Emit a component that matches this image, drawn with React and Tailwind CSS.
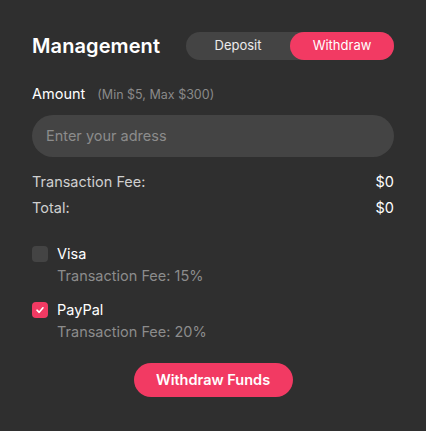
export default function App() {
    return (
        <div
            className="w-[426px] h-[431px] bg-[#2f2f2f] px-8 pt-8 text-white"
            style={{ fontFamily: "Inter, 'Noto Sans', sans-serif" }}
        >
            <div className="flex items-center justify-between">
                <h1 className="text-[20px] font-semibold leading-7 tracking-[0.1px]">Management</h1>
                <div className="flex h-7 w-[208px] rounded-full bg-[#444444] text-[13px]">
                    <button className="flex-1 rounded-full text-white/90">Deposit</button>
                    <button className="w-[104px] rounded-full bg-[#f23a63] text-white">Withdraw</button>
                </div>
            </div>

            <div className="mt-[23px] flex items-baseline gap-3">
                <span className="text-[14.5px]">Amount</span>
                <span className="text-[12.5px] text-[#8a8a8a]">(Min $5, Max $300)</span>
            </div>

            <input
                type="text"
                placeholder="Enter your adress"
                className="mt-[10px] block h-[42px] w-full rounded-full bg-[#444444] px-[14px] text-[14.5px] text-white placeholder-[#8c8c8c] outline-none"
            />

            <div className="mt-[15px] space-y-[6px] text-[14.5px]">
                <div className="flex justify-between leading-5">
                    <span className="text-[#cfcfcf]">Transaction Fee:</span>
                    <span>$0</span>
                </div>
                <div className="flex justify-between leading-5">
                    <span className="text-[#cfcfcf]">Total:</span>
                    <span>$0</span>
                </div>
            </div>

            <div className="mt-[26px] space-y-[14px]">
                <div>
                    <div className="flex items-center gap-[9px]">
                        <span className="h-4 w-4 rounded-[4px] bg-[#444444]"></span>
                        <span className="text-[14.5px] leading-5">Visa</span>
                    </div>
                    <div className="mt-[2px] pl-[25px] text-[14.5px] leading-5 text-[#8c8c8c]">Transaction Fee: 15%</div>
                </div>
                <div>
                    <div className="flex items-center gap-[9px]">
                        <span className="flex h-4 w-4 items-center justify-center rounded-[4px] bg-[#f23a63]">
                            <svg width="10" height="10" viewBox="0 0 10 10" fill="none">
                                <path d="M2 5.2L4.2 7.3L8 2.8" stroke="white" strokeWidth="1.6" strokeLinecap="round" strokeLinejoin="round" />
                            </svg>
                        </span>
                        <span className="text-[14.5px] leading-5">PayPal</span>
                    </div>
                    <div className="mt-[2px] pl-[25px] text-[14.5px] leading-5 text-[#8c8c8c]">Transaction Fee: 20%</div>
                </div>
            </div>

            <div className="mt-[21px] flex justify-center">
                <button className="h-[34px] w-[159px] rounded-full bg-[#f23a63] text-[14.5px] font-semibold text-white">
                    Withdraw Funds
                </button>
            </div>
        </div>
    );
}
